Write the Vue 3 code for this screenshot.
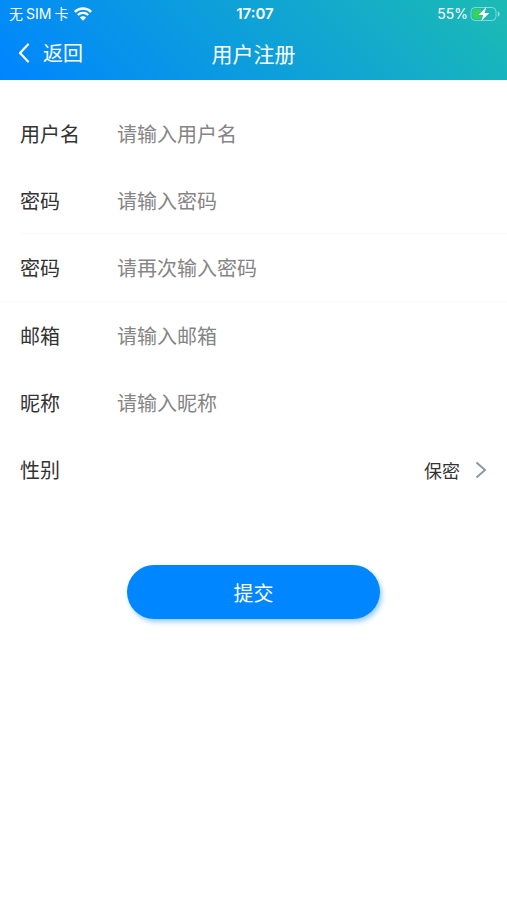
<script setup>
import { reactive } from 'vue'

const fields = [
  { key: 'username', label: '用户名', placeholder: '请输入用户名', type: 'text' },
  { key: 'password', label: '密码', placeholder: '请输入密码', type: 'password', line: 'inset' },
  { key: 'confirm', label: '密码', placeholder: '请再次输入密码', type: 'password', line: 'full' },
  { key: 'email', label: '邮箱', placeholder: '请输入邮箱', type: 'email' },
  { key: 'nickname', label: '昵称', placeholder: '请输入昵称', type: 'text' },
]

const form = reactive({
  username: '',
  password: '',
  confirm: '',
  email: '',
  nickname: '',
  gender: '保密',
})
</script>

<template>
  <div class="page">
    <header class="header">
      <div class="status">
        <div class="carrier">
          <span>无</span><span>SIM</span><span>卡</span>
          <svg class="wifi" viewBox="0 0 18 14" aria-hidden="true">
            <path d="M.9 4.9a11.500 11.500 0 0 1 16.200 0" />
            <path d="M3.800 8a7.400 7.400 0 0 1 10.400 0" />
            <path class="dot" d="M9 13.800L5.800 10.600a4.500 4.500 0 0 1 6.400 0z" />
          </svg>
        </div>
        <div class="time">17:07</div>
        <div class="power">
          <span>55%</span>
          <svg class="battery" viewBox="0 0 31 16" aria-hidden="true">
            <rect class="shell" x="1" y="1.5" width="25" height="13" rx="4" />
            <path class="tip" d="M27.8 5.2v5.6c2.6-1.2 2.6-4.4 0-5.6z" />
            <path class="level" d="M5 3h6v10H5a2.5 2.5 0 0 1-2.5-2.5v-5A2.5 2.5 0 0 1 5 3z" />
            <path class="bolt" d="M16.5 .8L8.5 9h4.6l-2 6.2L19.2 7h-4.7z" />
          </svg>
        </div>
      </div>
      <nav class="nav">
        <a class="back" href="#">
          <svg class="chevron" viewBox="0 0 12 20" aria-hidden="true">
            <path d="M10 1.5L2 10l8 8.5" />
          </svg>
          返回
        </a>
        <h1 class="title">用户注册</h1>
      </nav>
    </header>

    <form class="form" @submit.prevent>
      <div v-for="f in fields" :key="f.key" class="row" :class="f.line">
        <label class="label" :for="f.key">{{ f.label }}</label>
        <input
          :id="f.key"
          v-model="form[f.key]"
          class="input"
          :type="f.type"
          :placeholder="f.placeholder"
        />
      </div>
      <div class="row">
        <label class="label" for="gender">性别</label>
        <select id="gender" v-model="form.gender" class="select">
          <option>保密</option>
          <option>男</option>
          <option>女</option>
        </select>
        <svg class="arrow" viewBox="0 0 12 18" aria-hidden="true">
          <path d="M1.5 1.5L10 9l-8.5 7.5" />
        </svg>
      </div>
      <button class="submit" type="submit">提交</button>
    </form>
  </div>
</template>

<style>
body {
  background: #fff;
}
</style>

<style scoped>
.page {
  font-family: "Noto Sans CJK SC", sans-serif;
  color: #333;
}

.header {
  height: 80px;
  color: #fff;
  background: linear-gradient(45deg, #0085ff, #1cbbb4);
}

.status {
  display: grid;
  grid-template-columns: 1fr auto 1fr;
  align-items: center;
  height: 28px;
  padding: 0 6px 0 9px;
  font-family: Inter, "Noto Sans CJK SC", sans-serif;
  font-size: 14px;
  line-height: 20px;
}

.carrier {
  display: flex;
  align-items: center;
  gap: 3px;
}

.wifi {
  width: 18px;
  height: 14px;
  margin-left: 3px;
  overflow: visible;
  fill: none;
  stroke: #fff;
  stroke-width: 2.4;
}

.wifi .dot {
  fill: #fff;
  stroke: none;
}

.time {
  font-size: 15px;
  font-weight: 600;
}

.power {
  display: flex;
  align-items: center;
  justify-content: flex-end;
  gap: 2px;
}

.battery {
  width: 31px;
  height: 16px;
}

.shell {
  fill: none;
  stroke: rgba(255, 255, 255, 0.45);
}

.tip {
  fill: rgba(255, 255, 255, 0.5);
}

.level {
  fill: #35d35c;
}

.bolt {
  fill: #fff;
}

.nav {
  display: grid;
  grid-template-columns: 1fr auto 1fr;
  align-items: center;
  height: 50px;
  padding: 0 18px;
  line-height: 28px;
}

.back {
  display: flex;
  align-items: center;
  gap: 13px;
  color: #fff;
  font-size: 20px;
  text-decoration: none;
}

.chevron {
  width: 12px;
  height: 20px;
  fill: none;
  stroke: #fff;
  stroke-width: 2.2;
  stroke-linecap: round;
  stroke-linejoin: round;
}

.title {
  margin: 0;
  font-size: 21px;
  font-weight: 400;
}

.form {
  display: flex;
  flex-direction: column;
  padding: 20px 0;
}

.row {
  position: relative;
  display: flex;
  align-items: center;
  height: 67px;
  padding: 0 20px;
}

.full {
  border-bottom: 1px solid #fafafa;
}

.inset::after {
  content: "";
  position: absolute;
  right: 0;
  bottom: 0;
  left: 20px;
  height: 1px;
  background: #fafafa;
}

.label {
  width: 97px;
  font-size: 20px;
  line-height: 28px;
}

.input {
  flex: 1;
  min-width: 0;
  height: 28px;
  padding: 0;
  border: 0;
  outline: 0;
  background: transparent;
  color: #333;
  font-family: inherit;
  font-size: 20px;
  line-height: 28px;
}

.input::placeholder {
  color: #858585;
  opacity: 1;
}

.select {
  flex: 1;
  height: 28px;
  padding: 0;
  border: 0;
  outline: 0;
  appearance: none;
  background: transparent;
  color: #333;
  font-family: inherit;
  font-size: 18px;
  line-height: 28px;
  text-align: right;
  text-align-last: right;
}

.arrow {
  width: 12px;
  height: 18px;
  margin-left: 15px;
  fill: none;
  stroke: #8799a3;
  stroke-width: 2;
}

.submit {
  align-self: center;
  width: 50%;
  height: 54px;
  margin-top: 62px;
  border: 0;
  border-radius: 27px;
  background: #0087ff;
  box-shadow: 2px 3px 5px rgba(0, 129, 255, 0.4);
  color: #fff;
  font-family: inherit;
  font-size: 20px;
}
</style>
